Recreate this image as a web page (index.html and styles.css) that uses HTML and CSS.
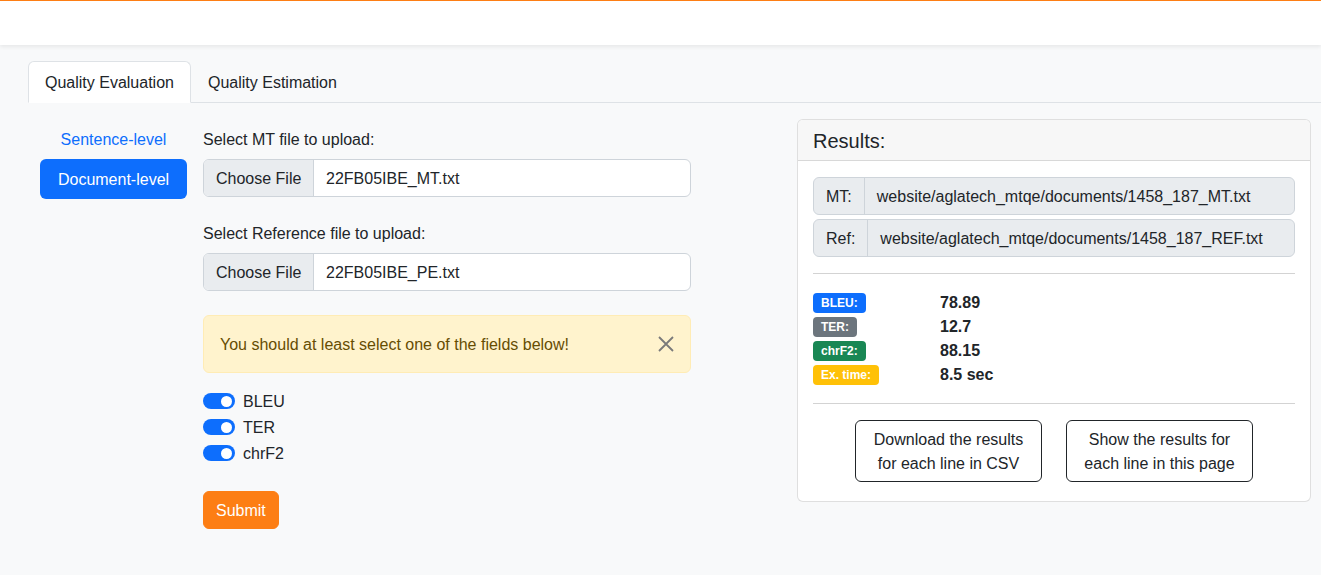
FILE: index.html
```html
<!DOCTYPE html>
<html lang="en">
<head>
<meta charset="utf-8">
<title>MTQE</title>
<link rel="stylesheet" href="styles.css">
</head>
<body>
<header class="topbar"></header>
<main class="main">
  <nav class="tabs">
    <a class="tab active">Quality Evaluation</a>
    <a class="tab">Quality Estimation</a>
  </nav>
  <div class="content">
    <div class="pills">
      <a class="pill">Sentence-level</a>
      <a class="pill active">Document-level</a>
    </div>
    <form class="form">
      <label class="form-label">Select MT file to upload:</label>
      <div class="file-input">
        <span class="file-btn">Choose File</span>
        <span class="file-name">22FB05IBE_MT.txt</span>
      </div>
      <label class="form-label">Select Reference file to upload:</label>
      <div class="file-input">
        <span class="file-btn">Choose File</span>
        <span class="file-name">22FB05IBE_PE.txt</span>
      </div>
      <div class="alert">
        <span>You should at least select one of the fields below!</span>
        <svg class="close" width="16" height="16" viewBox="0 0 16 16"><path d="M1 1 L15 15 M15 1 L1 15" stroke="#7a7a7a" stroke-width="1.8" fill="none"/></svg>
      </div>
      <div class="switch-row"><span class="switch"></span><span>BLEU</span></div>
      <div class="switch-row"><span class="switch"></span><span>TER</span></div>
      <div class="switch-row"><span class="switch"></span><span>chrF2</span></div>
      <button type="button" class="submit">Submit</button>
    </form>
    <section class="card">
      <div class="card-header">Results:</div>
      <div class="card-body">
        <div class="input-group">
          <span class="addon">MT:</span>
          <span class="field">website/aglatech_mtqe/documents/1458_187_MT.txt</span>
        </div>
        <div class="input-group">
          <span class="addon">Ref:</span>
          <span class="field">website/aglatech_mtqe/documents/1458_187_REF.txt</span>
        </div>
        <hr class="sep">
        <div class="scores">
          <div class="score"><span class="badge blue">BLEU:</span><span class="val">78.89</span></div>
          <div class="score"><span class="badge grey">TER:</span><span class="val">12.7</span></div>
          <div class="score"><span class="badge green">chrF2:</span><span class="val">88.15</span></div>
          <div class="score"><span class="badge yellow">Ex. time:</span><span class="val">8.5 sec</span></div>
        </div>
        <hr class="sep">
        <div class="actions">
          <button type="button" class="outline">Download the results for each line in CSV</button>
          <button type="button" class="outline">Show the results for each line in this page</button>
        </div>
      </div>
    </section>
  </div>
</main>
</body>
</html>
```
FILE: styles.css
```css
* { box-sizing: border-box; }
html, body { margin: 0; padding: 0; }
body {
  font-family: "Liberation Sans", Arial, sans-serif;
  font-size: 16px;
  line-height: 24px;
  color: #212529;
  background: #f8f9fa;
  height: 575px;
  overflow: hidden;
}
.topbar {
  height: 45px;
  background: #fff;
  border-top: 1px solid #fd7e14;
  box-shadow: 0 2px 4px rgba(0,0,0,0.07);
  position: relative;
}
.main { padding: 16px 0 0 28px; }
.tabs {
  display: flex;
  border-bottom: 1px solid #dee2e6;
}
.tab {
  padding: 9px 16px 7px;
  border: 1px solid transparent;
  border-top-left-radius: 6px;
  border-top-right-radius: 6px;
  margin-bottom: -1px;
  color: #212529;
}
.tab.active {
  background: #fff;
  border-color: #dee2e6 #dee2e6 #fff;
}
.content {
  display: flex;
  align-items: flex-start;
  padding: 16px 10px 0 12px;
}
.pills { width: 147px; display: flex; flex-direction: column; margin-right: 16px; }
.pill {
  display: block;
  text-align: center;
  padding: 9px 16px 7px;
  color: #0d6efd;
  border-radius: 6px;
}
.pill.active { background: #0d6efd; color: #fff; }
.form { width: 488px; padding-top: 9px; display: flex; flex-direction: column; }
.form-label { display: block; margin-bottom: 7px; }
.file-input {
  display: flex;
  height: 38px;
  border: 1px solid #ced4da;
  border-radius: 6px;
  background: #fff;
  overflow: hidden;
  margin-bottom: 25px;
}
.file-btn {
  width: 110px;
  padding: 7px 12px 5px;
  background: #e9ecef;
  border-right: 1px solid #ced4da;
  white-space: nowrap;
}
.file-name { padding: 7px 12px 5px; }
.alert {
  display: flex;
  justify-content: space-between;
  align-items: center;
  height: 58px;
  margin-top: -1px;
  padding: 17px 16px 15px 16px;
  background: #fff3cd;
  border: 1px solid #ffecb5;
  border-radius: 6px;
  color: #664d03;
  margin-bottom: 16px;
}
.close { margin-right: 0; margin-top: -2px; }
.switch-row {
  display: flex;
  align-items: center;
  gap: 8px;
  height: 24px;
  margin-bottom: 2px;
}
.switch-row span:last-child { padding-top: 2px; }
.switch {
  width: 32px;
  height: 16px;
  border-radius: 8px;
  background: #0d6efd;
  position: relative;
}
.switch::after {
  content: "";
  position: absolute;
  right: 3px;
  top: 2.5px;
  width: 11px;
  height: 11px;
  border-radius: 50%;
  background: #fff;
}
.submit {
  align-self: flex-start;
  margin-top: 24px;
  height: 38px;
  padding: 7px 12px 5px;
  font: inherit;
  color: #fff;
  background: #fd7e14;
  border: 1px solid #fd7e14;
  border-radius: 6px;
}
.card {
  margin-left: auto;
  width: 514px;
  background: #fff;
  border: 1px solid rgba(0,0,0,0.125);
  border-radius: 6px;
  overflow: hidden;
}
.card-header {
  padding: 9px 15px 7px;
  font-size: 20px;
  line-height: 24px;
  font-weight: 500;
  background: #f7f7f7;
  border-bottom: 1px solid rgba(0,0,0,0.125);
}
.card-body { padding: 16px 15px 19px; }
.input-group {
  display: flex;
  height: 38px;
  border: 1px solid #ced4da;
  border-radius: 6px;
  background: #e9ecef;
  margin-bottom: 4px;
}
.addon { padding: 7px 12px 5px; border-right: 1px solid #ced4da; }
.field { padding: 7px 12px 5px; white-space: nowrap; }
.sep {
  border: 0;
  border-top: 1px solid #d3d3d3;
  margin: 16px 0 16px;
}
.scores { padding-top: 1px; }
.score { display: flex; align-items: center; height: 24px; position: relative; }
.badge {
  display: inline-block;
  font-size: 12px;
  line-height: 12px;
  font-weight: 700;
  color: #fff;
  padding: 4px 8px 4px;
  border-radius: 4px;
}
.blue { background: #0d6efd; }
.grey { background: #6c757d; }
.green { background: #198754; }
.yellow { background: #ffc107; }
.val { position: absolute; left: 127px; font-weight: 700; }
.actions { display: flex; justify-content: center; gap: 24px; }
.outline {
  width: 187px;
  height: 62px;
  padding: 7px 12px 5px;
  font: inherit;
  color: #212529;
  background: #fff;
  border: 1px solid #212529;
  border-radius: 6px;
  text-align: center;
}
```
